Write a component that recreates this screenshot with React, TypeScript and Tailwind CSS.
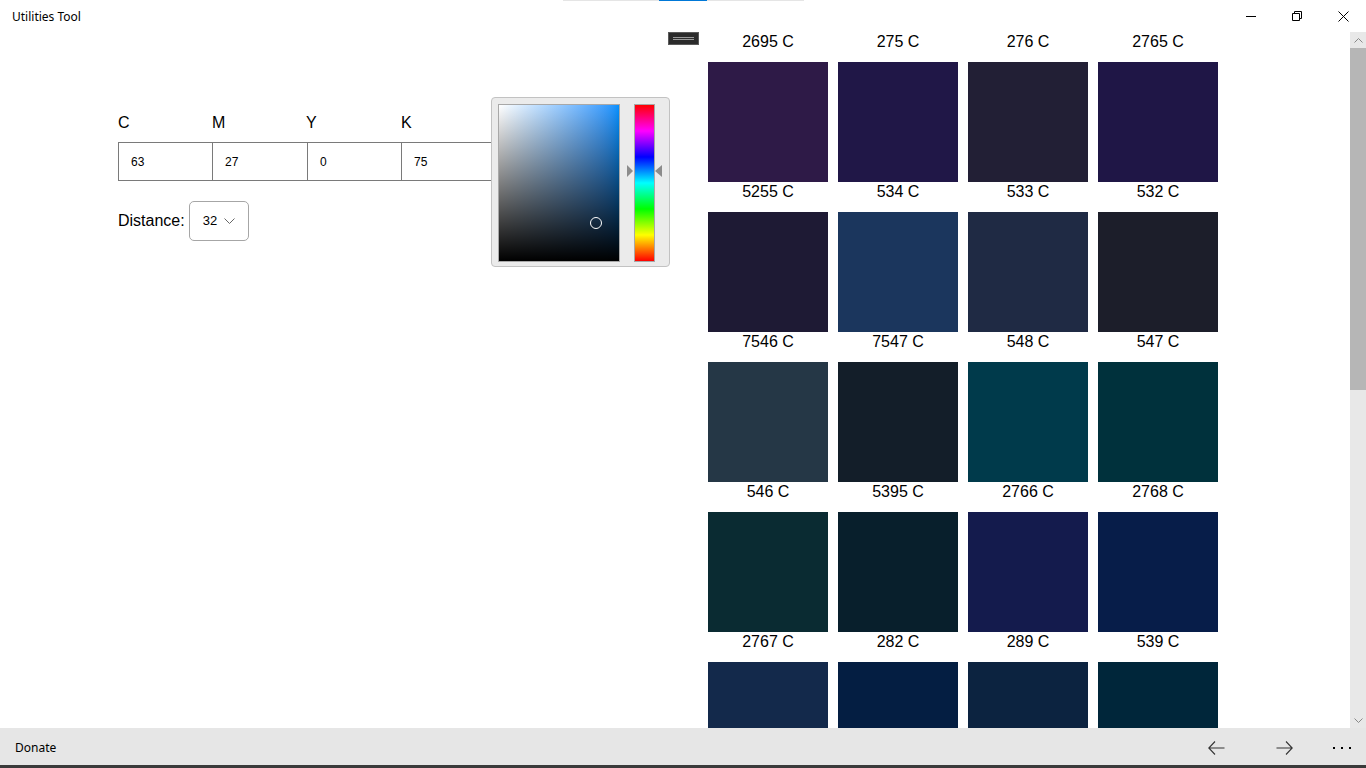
import React from 'react';

const swatches: { name: string; color: string }[][] = [
  [
    { name: '2695 C', color: '#2e1a47' },
    { name: '275 C', color: '#201747' },
    { name: '276 C', color: '#221f35' },
    { name: '2765 C', color: '#1f1646' },
  ],
  [
    { name: '5255 C', color: '#1e1a34' },
    { name: '534 C', color: '#1b365d' },
    { name: '533 C', color: '#1f2a44' },
    { name: '532 C', color: '#1c1e2a' },
  ],
  [
    { name: '7546 C', color: '#253746' },
    { name: '7547 C', color: '#131e29' },
    { name: '548 C', color: '#003a4b' },
    { name: '547 C', color: '#00313c' },
  ],
  [
    { name: '546 C', color: '#0a2b32' },
    { name: '5395 C', color: '#081f2c' },
    { name: '2766 C', color: '#141b4d' },
    { name: '2768 C', color: '#071d49' },
  ],
  [
    { name: '2767 C', color: '#13294b' },
    { name: '282 C', color: '#041e42' },
    { name: '289 C', color: '#0c2340' },
    { name: '539 C', color: '#00263a' },
  ],
];

const cmyk = [
  { label: 'C', value: '63', labelW: 'w-[94px]', cellW: 'w-[95px]' },
  { label: 'M', value: '27', labelW: 'w-[94px]', cellW: 'w-[96px] -ml-px' },
  { label: 'Y', value: '0', labelW: 'w-[95px]', cellW: 'w-[95px] -ml-px' },
  { label: 'K', value: '75', labelW: 'w-[94px]', cellW: 'w-[96px] -ml-px' },
];

const segoe = { fontFamily: '"Noto Sans", "Open Sans", sans-serif' };

function TitleBar() {
  return (
    <div className="relative h-8 flex items-center bg-white">
      <div className="absolute top-0 left-[563px] w-[241px] h-px bg-[#e5e5e5]">
        <div className="absolute left-[96px] w-[48px] h-px bg-[#0078d7]" />
      </div>
      <span className="pl-3 pt-px text-[12px] text-black" style={segoe}>
        Utilities Tool
      </span>
      <div className="ml-auto flex h-full">
        <div className="w-[46px] h-full flex items-center justify-center">
          <svg width="10" height="10" viewBox="0 0 10 10">
            <path d="M0 5.5 H10" stroke="#000" strokeWidth="1" />
          </svg>
        </div>
        <div className="w-[46px] h-full flex items-center justify-center">
          <svg width="10" height="10" viewBox="0 0 10 10">
            <path d="M0.5 2.5 H7.5 V9.5 H0.5 Z" fill="none" stroke="#000" strokeWidth="1" />
            <path d="M2.5 2.5 V0.5 H9.5 V7.5 H7.5" fill="none" stroke="#000" strokeWidth="1" />
          </svg>
        </div>
        <div className="w-[46px] h-full flex items-center justify-center">
          <svg width="11" height="11" viewBox="0 0 11 11">
            <path d="M0.5 0.5 L10.5 10.5 M10.5 0.5 L0.5 10.5" stroke="#000" strokeWidth="1" />
          </svg>
        </div>
      </div>
    </div>
  );
}

function ColorPicker() {
  return (
    <div className="absolute left-[491px] top-[65px] w-[179px] h-[170px] rounded-[4px] border border-[#c2c2c2] bg-[#ebebeb] p-[6px] flex">
      <div className="relative w-[122px] h-[158px] border border-[#a8a8a8] bg-linear-to-r from-white to-[#0091ff]">
        <div className="absolute inset-0 bg-linear-to-t from-black to-transparent" />
        <div className="absolute left-[91px] top-[112px] w-[12px] h-[12px] rounded-full border-[1.5px] border-white" />
      </div>
      <div className="w-[14px]" />
      <div className="w-[21px] h-[158px] border border-[#a8a8a8] bg-[linear-gradient(to_bottom,#ff0000,#ff00ff,#0000ff,#00ffff,#00ff00,#ffff00,#ff0000)]" />
      <div className="absolute left-[135px] top-[67px] w-0 h-0 border-y-[6px] border-y-transparent border-l-[6px] border-l-[#8c8c8c]" />
      <div className="absolute left-[163px] top-[67px] w-0 h-0 border-y-[6px] border-y-transparent border-r-[7px] border-r-[#8c8c8c]" />
    </div>
  );
}

function LeftPanel() {
  return (
    <div className="relative w-[700px] h-full pl-[118px] pt-[82px]" style={{ fontFamily: '"Liberation Sans", Arial, sans-serif' }}>
      <div className="absolute left-[668px] top-0 w-[31px] h-[13px] bg-[#2b2b2b] border border-[#5a5a5a] flex flex-col items-center justify-center gap-px">
        <div className="w-[21px] h-px bg-[#9a9a9a]" />
        <div className="w-[21px] h-px bg-[#9a9a9a]" />
      </div>

      <div className="flex">
        {cmyk.map((c) => (
          <div key={c.label} className={`${c.labelW} text-[16px] leading-[18px] text-black`}>
            {c.label}
          </div>
        ))}
      </div>
      <div className="flex mt-[10px]">
        {cmyk.map((c) => (
          <div
            key={c.label}
            className={`${c.cellW} h-[39px] border border-[#7a7a7a] flex items-center pl-3 text-[12px] text-black`}
          >
            {c.value}
          </div>
        ))}
      </div>
      <div className="flex items-center mt-[20px] gap-[4px]">
        <span className="text-[16px] text-black">Distance:</span>
        <div className="w-[60px] h-[40px] rounded-[5px] border border-[#a6a6a6] flex items-center pl-[13px] gap-[7px] text-[13px] text-black">
          <span>32</span>
          <svg width="11" height="7" viewBox="0 0 11 7">
            <path d="M0.5 0.5 L5.5 5.5 L10.5 0.5" fill="none" stroke="#666" strokeWidth="1" />
          </svg>
        </div>
      </div>

      <ColorPicker />
    </div>
  );
}

function SwatchGrid() {
  return (
    <div className="flex-1 h-full overflow-hidden pl-2" style={{ fontFamily: '"Liberation Sans", Arial, sans-serif' }}>
      <div className="grid grid-cols-[repeat(4,120px)] gap-x-[10px]">
        {swatches[0].map((s) => (
          <div key={s.name} className="h-[30px] pt-px text-center text-[16px] leading-[18px] text-black">
            {s.name}
          </div>
        ))}
        {swatches.slice(1).flat().map((s, i) => {
          const row = Math.floor(i / 4) + 1;
          const col = i % 4;
          return (
            <div key={s.name} className="flex flex-col">
              <div className="h-[120px]" style={{ backgroundColor: swatches[row - 1][col].color }} />
              <div className="h-[30px] pt-px text-center text-[16px] leading-[18px] text-black">{s.name}</div>
            </div>
          );
        })}
        {swatches[4].map((s) => (
          <div key={s.name + 'x'} className="h-[120px]" style={{ backgroundColor: s.color }} />
        ))}
      </div>
    </div>
  );
}

function ScrollBar() {
  return (
    <div className="w-4 h-full bg-[#e8e8e8] flex flex-col">
      <div className="h-4 flex items-center justify-center">
        <svg width="9" height="5" viewBox="0 0 9 5">
          <path d="M0.5 4.5 L4.5 0.5 L8.5 4.5" fill="none" stroke="#888" strokeWidth="1" />
        </svg>
      </div>
      <div className="h-[342px] bg-[#b6b6b6]" />
      <div className="flex-1" />
      <div className="h-4 flex items-center justify-center">
        <svg width="9" height="5" viewBox="0 0 9 5">
          <path d="M0.5 0.5 L4.5 4.5 L8.5 0.5" fill="none" stroke="#888" strokeWidth="1" />
        </svg>
      </div>
    </div>
  );
}

function BottomBar() {
  return (
    <div className="h-[37px] bg-[#e6e6e6] flex items-center" style={segoe}>
      <span className="pl-[15px] pt-[3px] text-[12px] text-black">Donate</span>
      <div className="ml-auto flex items-center h-full pt-[2px]">
        <div className="w-[68px] h-full flex items-center justify-center">
          <svg width="17" height="14" viewBox="0 0 17 14">
            <path d="M7 0.5 L0.8 7 L7 13.5 M0.8 7 H16.5" fill="none" stroke="#333" strokeWidth="1.1" />
          </svg>
        </div>
        <div className="w-[68px] h-full flex items-center justify-center">
          <svg width="17" height="14" viewBox="0 0 17 14">
            <path d="M10 0.5 L16.2 7 L10 13.5 M16.2 7 H0.5" fill="none" stroke="#333" strokeWidth="1.1" />
          </svg>
        </div>
        <div className="w-[48px] h-full flex items-center justify-center gap-[6px]">
          <div className="w-[2px] h-[2px] bg-black" />
          <div className="w-[2px] h-[2px] bg-black" />
          <div className="w-[2px] h-[2px] bg-black" />
        </div>
      </div>
    </div>
  );
}

export default function App() {
  return (
    <div className="w-[1366px] h-[768px] flex flex-col bg-white overflow-hidden">
      <TitleBar />
      <div className="h-[696px] flex">
        <LeftPanel />
        <SwatchGrid />
        <ScrollBar />
      </div>
      <BottomBar />
      <div className="h-[3px] bg-[#3a3a3a]" />
    </div>
  );
}
